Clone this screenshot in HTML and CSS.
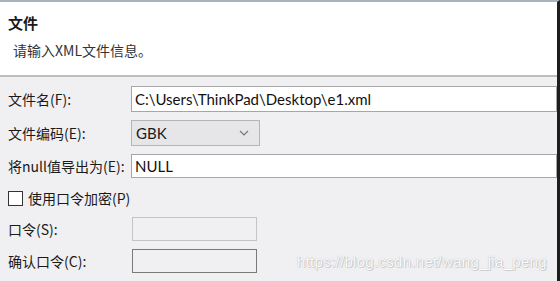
FILE: index.html
```html
<!DOCTYPE html>
<html lang="zh-CN">
<head>
  <meta charset="UTF-8">
  <title>文件</title>
  <link rel="stylesheet" href="styles.css">
</head>
<body>

<div class="window">
  <!-- 标题区 -->
  <div class="header">
    <div class="title">文件</div>
    <div class="desc">请输入XML文件信息。</div>
  </div>

  <!-- 表单 -->
  <div class="form">
    <div class="row">
      <label class="label">文件名(F):</label>
      <input class="field wide" type="text" value="C:\Users\ThinkPad\Desktop\e1.xml">
    </div>
    <div class="row">
      <label class="label">文件编码(E):</label>
      <div class="select">
        <span>GBK</span>
        <svg class="chevron" width="10" height="6" viewBox="0 0 10 6"><path d="M1 1 L5 5 L9 1" fill="none" stroke="#777" stroke-width="1.1"/></svg>
      </div>
    </div>
    <div class="row">
      <label class="label">将null值导出为(E):</label>
      <input class="field wide short" type="text" value="NULL">
    </div>

    <div class="check-row">
      <span class="checkbox"></span>
      <span class="check-label">使用口令加密(P)</span>
    </div>

    <div class="row pw">
      <label class="label">口令(S):</label>
      <div class="field small off"></div>
    </div>
    <div class="row pw">
      <label class="label">确认口令(C):</label>
      <div class="field small off dark"></div>
    </div>
  </div>

  <div class="watermark">https://blog.csdn.net/wang_jia_peng</div>
</div>

</body>
</html>
```

FILE: styles.css
```css
body {
  margin: 0;
  font-family: "Noto Sans CJK SC", "Noto Sans", sans-serif;
  color: #1a1a1a;
  overflow: hidden;
}

.window {
  position: relative;
  width: 560px;
  height: 281px;
  box-sizing: border-box;
  border-top: 2px solid #a9b3bd;
  border-right: 3px solid #1e1e1e;
  background: #f0f0f2;
}

.header {
  height: 75px;
  box-sizing: border-box;
  padding: 12px 8px 0;
  background: #fff;
  border-bottom: 2px solid #bdbdbd;
}

.title {
  font-size: 15px;
  font-weight: bold;
  line-height: 18px;
}

.desc {
  margin: 9px 0 0 5px;
  font-size: 14px;
  line-height: 18px;
  color: #333;
}

.form {
  padding: 9px 0 0 8px;
}

.row {
  display: flex;
  align-items: center;
  margin-bottom: 8px;
}

.label {
  width: 123px;
  flex: none;
  font-size: 14px;
}

.field {
  box-sizing: border-box;
  height: 26px;
  border: 1px solid #a6a6a6;
  background: #fff;
  font-family: Lato, "Noto Sans", sans-serif;
  font-size: 15px;
  color: #111;
  padding: 0 3px;
  margin: 0;
  outline: none;
}

.wide {
  flex: 1;
  min-width: 0;
}

.short {
  height: 24px;
}

.select {
  box-sizing: border-box;
  width: 129px;
  height: 26px;
  display: flex;
  align-items: center;
  justify-content: space-between;
  padding: 0 10px 0 4px;
  border: 1px solid #b5b5b5;
  background: #e6e6e8;
  font-family: Lato, "Noto Sans", sans-serif;
  font-size: 15px;
}

.check-row {
  display: flex;
  align-items: center;
  gap: 5px;
  margin: 10px 0 9px;
}

.checkbox {
  width: 15px;
  height: 15px;
  box-sizing: border-box;
  border: 1px solid #333;
  background: #fff;
}

.check-label {
  font-size: 14px;
}

.pw .label {
  width: 124px;
}

.small {
  width: 125px;
  height: 24px;
}

.off {
  background: #f0f0f2;
  border-color: #c4c4c4;
}

.off.dark {
  border-color: #7a7a7a;
}

.watermark {
  position: absolute;
  left: 297px;
  top: 251px;
  font-family: "Liberation Sans", Arial, sans-serif;
  font-size: 15px;
  color: #fcfcfc;
  text-shadow: 0 0 1px #a0a0a0, 1px 1px 0 #d4d4d4;
  letter-spacing: 0.3px;
}
```
